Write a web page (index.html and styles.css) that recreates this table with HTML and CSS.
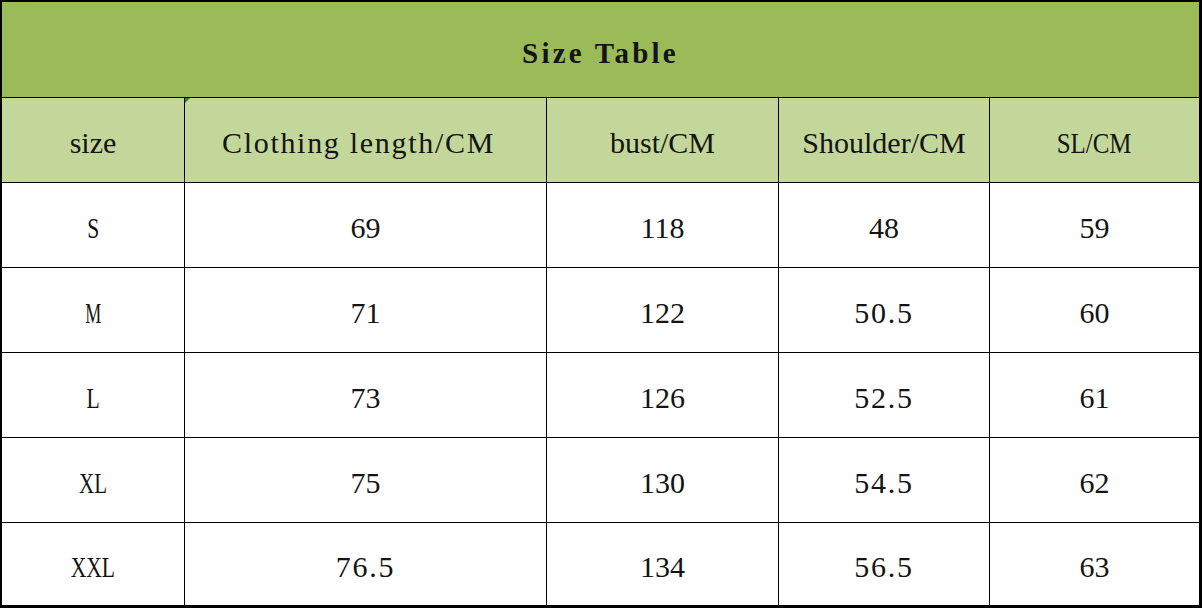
FILE: index.html
```html
<!DOCTYPE html>
<html>
<head>
<meta charset="utf-8">
<link rel="stylesheet" href="styles.css">
</head>
<body>
<div class="table">
  <div class="cell title"><span class="t bold">Size Table</span></div>
  <div class="cell head"><span class="t">size</span></div>
  <div class="cell head flag"><span class="t spaced">Clothing length/CM</span></div>
  <div class="cell head"><span class="t">bust/CM</span></div>
  <div class="cell head"><span class="t">Shoulder/CM</span></div>
  <div class="cell head"><span class="t sq83">SL/CM</span></div>

  <div class="cell"><span class="t sq72">S</span></div>
  <div class="cell"><span class="t">69</span></div>
  <div class="cell"><span class="t">118</span></div>
  <div class="cell"><span class="t">48</span></div>
  <div class="cell"><span class="t">59</span></div>

  <div class="cell"><span class="t sq60">M</span></div>
  <div class="cell"><span class="t">71</span></div>
  <div class="cell"><span class="t">122</span></div>
  <div class="cell"><span class="t dec">50.5</span></div>
  <div class="cell"><span class="t">60</span></div>

  <div class="cell"><span class="t sq72">L</span></div>
  <div class="cell"><span class="t">73</span></div>
  <div class="cell"><span class="t">126</span></div>
  <div class="cell"><span class="t dec">52.5</span></div>
  <div class="cell"><span class="t">61</span></div>

  <div class="cell"><span class="t sq70">XL</span></div>
  <div class="cell"><span class="t">75</span></div>
  <div class="cell"><span class="t">130</span></div>
  <div class="cell"><span class="t dec">54.5</span></div>
  <div class="cell"><span class="t">62</span></div>

  <div class="cell"><span class="t sq72">XXL</span></div>
  <div class="cell"><span class="t dec">76.5</span></div>
  <div class="cell"><span class="t">134</span></div>
  <div class="cell"><span class="t dec">56.5</span></div>
  <div class="cell"><span class="t">63</span></div>
</div>
</body>
</html>
```

FILE: styles.css
```css
html, body {
  margin: 0;
  padding: 0;
  background: #ffffff;
}

.table {
  width: 1202px;
  height: 608px;
  box-sizing: border-box;
  display: grid;
  grid-template-columns: 182px 361px 231px 210px 209px;
  grid-template-rows: 95px 84px 84px 84px 84px 84px 82px;
  gap: 1px;
  background: #000000;
  border-style: solid;
  border-color: #000000;
  border-width: 2px 3px 3px 2px;
  font-family: "Liberation Serif", "Times New Roman", serif;
  color: #141414;
}

.cell {
  background: #ffffff;
  display: flex;
  align-items: center;
  justify-content: center;
  padding-top: 6px;
  box-sizing: border-box;
  position: relative;
}

.title {
  grid-column: 1 / -1;
  background: #9bbb59;
}

.head {
  background: #c4d79b;
}

.t {
  display: inline-block;
  font-size: 30px;
  line-height: 32px;
  white-space: nowrap;
}

.bold {
  font-weight: bold;
  letter-spacing: 3.2px;
  font-size: 29px;
}

.spaced {
  letter-spacing: 1.7px;
  margin-right: 14px;
}

.dec {
  letter-spacing: 1.8px;
}

.sq83 { transform: scaleX(0.83); }
.sq72 { transform: scaleX(0.72); }
.sq70 { transform: scaleX(0.70); }
.sq60 { transform: scaleX(0.60); }

.flag::before {
  content: "";
  position: absolute;
  left: 0;
  top: 0;
  width: 0;
  height: 0;
  border-top: 5px solid #1f8a1f;
  border-right: 5px solid transparent;
}
```
